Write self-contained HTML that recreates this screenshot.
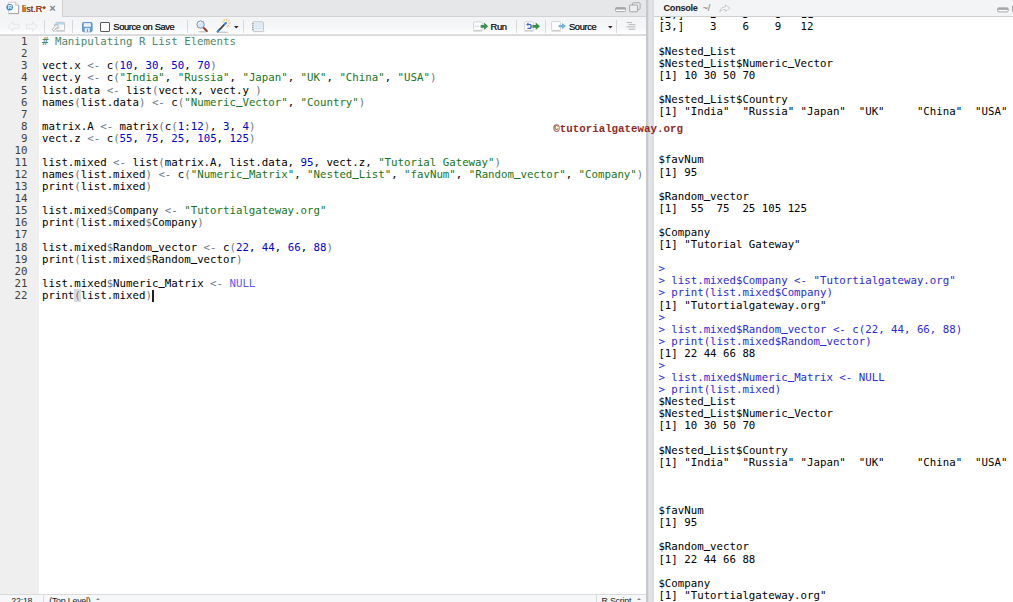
<!DOCTYPE html>
<html><head><meta charset="utf-8"><title>list.R</title>
<style>
html,body{margin:0;padding:0;}
body{width:1013px;height:602px;overflow:hidden;position:relative;background:#fff;font-family:"Liberation Sans",sans-serif;}
.abs{position:absolute;}
svg{position:absolute;overflow:visible;}
#left{left:0;top:0;width:646px;height:602px;background:#fff;overflow:hidden;}
#tabbar{left:0;top:0;width:646px;height:17px;background:#e6e7e9;border-bottom:1px solid #d2d3d5;box-sizing:border-box;}
#tab{left:0;top:0;width:63px;height:17px;background:#f4f5f6;border-right:1px solid #cfd0d2;box-sizing:border-box;}
#tab .nm{left:22.1px;top:3.6px;font-size:9.1px;color:#863c1e;letter-spacing:0px;text-shadow:0 0 0.5px #863c1e;}
#tab .x{left:49.2px;top:2.1px;font-size:11px;color:#808285;font-weight:bold;}
#toolbar{left:0;top:17px;width:646px;height:19px;background:linear-gradient(#f3f4f5 0%,#f6f7f8 60%,#ffffff 88%,#dcddde 92%,#d8d9da 100%);box-sizing:border-box;}
.tb{font-size:9.4px;color:#222;top:3.6px;letter-spacing:-0.4px;white-space:pre;text-shadow:0 0 0.15px #333;}
.sep{top:3px;width:1.4px;height:13px;background:#d8d9da;}
#editor{left:0;top:36px;width:646px;height:558px;background:#fff;overflow:hidden;}
#gutter{left:0;top:0;width:39px;height:558px;background:#efefef;}
#lines{left:0;top:0.2px;width:646px;}
.ln{height:12.09px;line-height:12.09px;white-space:pre;font-family:"DejaVu Sans Mono","Liberation Mono",monospace;font-size:10.74px;color:#000;}
.ln .no{display:inline-block;width:27.5px;text-align:right;color:#404040;}
.ln .cd{position:absolute;left:42px;}
u{text-decoration:none;position:relative;top:-2px;font-weight:bold;}
.c{color:#4c886b;}
.o{color:#687687;}
.p{color:#687687;}
.m{color:#687687;background:#dcdcdc;}
.n{color:#0000cd;}
.s{color:#167522;}
.k{color:#585cf6;}
.cur{display:inline-block;width:1.7px;height:12.5px;background:#2a1c1e;vertical-align:top;margin-left:0.2px;}
#status{left:0;top:594px;width:646px;height:8px;background:#f6f7f8;border-top:1px solid #d9dadb;box-sizing:border-box;overflow:hidden;}
#status span{position:absolute;top:1px;font-size:8.8px;color:#222;white-space:pre;letter-spacing:-0.2px;}
#status i{position:absolute;top:0;width:1px;height:8px;background:#d9dadb;}
#status b{position:absolute;top:3.4px;width:0;height:0;border-left:2px solid transparent;border-right:2px solid transparent;border-bottom:2.4px solid #888;}
#split{left:646px;top:0;width:8px;height:602px;background:linear-gradient(90deg,#d4d6d8 0,#c4c6c9 0.6px,#c6c8cb 2px,#dcdde0 2.6px,#e3e4e7 3.5px,#e2e3e6 5.4px,#dadbde 6px,#dcdde0 7.6px,#eeeeef 8px);}
#right{left:654px;top:0;width:359px;height:602px;background:#fff;overflow:hidden;}
#chead{left:0;top:0;width:359px;height:17px;background:#f3f4f5;border-bottom:1px solid #cecfd1;box-sizing:border-box;}
#chead .t{left:9.5px;top:3px;font-size:9.2px;font-weight:bold;color:#222;letter-spacing:-0.3px;}
#chead .pp{left:48.5px;top:3px;font-size:9.2px;color:#777;}
#cons{left:4.4px;top:9.3px;width:360px;}
.cl{height:12.1px;line-height:12.1px;white-space:pre;font-family:"DejaVu Sans Mono","Liberation Mono",monospace;font-size:10.74px;color:#000;}
.cl.i{color:#2a2ad8;}
#wm{left:553.3px;top:123.4px;font-family:"Liberation Mono",monospace;font-weight:bold;font-size:10.8px;color:#8e2b26;white-space:pre;z-index:5;}
</style></head><body>
<div id="left" class="abs">
  <div id="tabbar" class="abs"></div>
  <div id="tab" class="abs">
    <svg style="left:6px;top:1px" width="14" height="14" viewBox="0 0 14 14">
      <path d="M2.6 1.2 H9.6 L12.6 4.2 V12.6 H2.6 Z" fill="#fff" stroke="#c6c8ca" stroke-width="0.9"/>
      <path d="M12.6 4.2 V12.6 H2.6" fill="none" stroke="#a2a4a7" stroke-width="1"/>
      <path d="M9.6 1.2 V4.2 H12.6" fill="#eee" stroke="#b4b6b8" stroke-width="0.8"/>
      <circle cx="3.7" cy="6.2" r="3.3" fill="#4b86c6"/>
      <text x="1.7" y="8.3" font-family="Liberation Sans,sans-serif" font-size="5.8" font-weight="bold" fill="#fff">R</text>
    </svg>
    <span class="nm abs">list.R*</span><span class="x abs">×</span>
  </div>
  <svg style="left:614px;top:2px" width="28" height="12" viewBox="0 0 28 12">
    <rect x="1.6" y="5.6" width="10" height="4" rx="1" fill="#fff" stroke="#a6a7a9" stroke-width="1"/>
    <rect x="1.6" y="5.6" width="10" height="2" fill="#a6a7a9"/>
    <rect x="18.5" y="0.8" width="7.6" height="6.6" rx="0.8" fill="#eceded" stroke="#9c9d9f" stroke-width="0.9"/>
    <rect x="15.6" y="3" width="8" height="6.8" rx="0.8" fill="#eceded" stroke="#9c9d9f" stroke-width="0.9"/>
  </svg>
  <div id="toolbar" class="abs">
    <!-- back / forward arrows -->
    <svg style="left:7px;top:4px" width="32" height="12" viewBox="0 0 32 12">
      <path d="M1 5.5 L6 0.8 V3.3 H12 V7.7 H6 V10.2 Z" fill="#f6f6f7" stroke="#e3e4e5" stroke-width="0.9"/>
      <path d="M30.5 5.5 L25.5 0.8 V3.3 H19.5 V7.7 H25.5 V10.2 Z" fill="#f6f6f7" stroke="#e3e4e5" stroke-width="0.9"/>
    </svg>
    <i class="sep abs" style="left:43.5px"></i>
    <!-- show in new window -->
    <svg style="left:51px;top:4px" width="15" height="12" viewBox="0 0 15 12">
      <rect x="2" y="9.9" width="12.4" height="0.9" fill="#d4d5d7"/>
      <rect x="4.9" y="1.3" width="8.6" height="8.4" rx="1" fill="#f9fafb" stroke="#b2b4b7" stroke-width="0.8"/>
      <rect x="5.3" y="1.8" width="7.8" height="1.8" fill="#a6daf7"/>
      <path d="M8.8 4.2 V9.4" stroke="#e2e3e5" stroke-width="0.7"/>
      <path d="M7 3.9 L7 7.9 L5.7 6.6 L2.6 9.8 L1.1 8.3 L4.3 5.2 L3 3.9 Z" fill="#fbfbfc" stroke="#a4a6a9" stroke-width="0.8" stroke-linejoin="round"/>
    </svg>
    <i class="sep abs" style="left:72px"></i>
    <!-- save -->
    <svg style="left:81.8px;top:4.7px" width="11" height="11" viewBox="0 0 11 11">
      <rect x="0.5" y="0.5" width="9.6" height="9.3" rx="1.1" fill="#64a0d9" stroke="#4d87c6" stroke-width="0.8"/>
      <rect x="1.8" y="1.2" width="7" height="3.5" fill="#f8fbfe"/>
      <path d="M2.6 2.5 H8 M2.6 3.6 H8" stroke="#dde5ee" stroke-width="0.5"/>
      <rect x="2.7" y="6.2" width="5" height="3.6" fill="#f1f6fc"/>
      <rect x="4.9" y="6.9" width="1.2" height="2.9" fill="#64a0d9"/>
    </svg>
    <!-- checkbox -->
    <div class="abs" style="left:100px;top:5px;width:10px;height:10px;box-sizing:border-box;border:1px solid #5a5a5a;background:#fff;border-radius:1px"></div>
    <span class="tb abs" style="left:113.3px">Source on Save</span>
    <i class="sep abs" style="left:186.5px"></i>
    <!-- magnifier -->
    <svg style="left:195px;top:3px" width="14" height="13" viewBox="0 0 14 13">
      <ellipse cx="8" cy="11.8" rx="5" ry="0.7" fill="#c8c9cb"/>
      <path d="M8 7.2 L11.8 11" stroke="#8b3d1c" stroke-width="1.9" stroke-linecap="round"/>
      <circle cx="5.6" cy="4.6" r="3.7" fill="#d3e7f8" stroke="#8796a5" stroke-width="1"/>
      <path d="M3.4 3.8 A2.5 2.5 0 0 1 6 2.2" stroke="#fff" stroke-width="0.9" fill="none"/>
    </svg>
    <!-- wand -->
    <svg style="left:215px;top:1px" width="18" height="16" viewBox="0 0 18 16">
      <ellipse cx="8" cy="14.2" rx="6" ry="0.7" fill="#c8c9cb"/>
      <path d="M2.6 13.6 L10.8 5" stroke="#3b3d42" stroke-width="1.8" stroke-linecap="round"/>
      <path d="M2.6 13.6 L3.7 12.4" stroke="#3c8fdc" stroke-width="1.9" stroke-linecap="round"/>
      <path d="M9.7 6.1 L10.8 5" stroke="#3c8fdc" stroke-width="1.9" stroke-linecap="round"/>
      <g stroke="#e4b548" stroke-width="0.8" stroke-linecap="round">
        <path d="M9 1.2 L9.6 2.6"/><path d="M12 0.8 L11.8 2.6"/><path d="M14.6 2 L13.3 3.3"/><path d="M15.2 5.2 L13.8 5.2"/><path d="M14.2 8.2 L13 7.2"/><path d="M12.4 8.8 L12.2 7.8"/><path d="M7.4 3.2 L8.6 4"/>
      </g>
    </svg>
    <svg style="left:233.6px;top:8.8px" width="5" height="3" viewBox="0 0 5 3"><path d="M0 0 H4.6 L2.3 2.4 Z" fill="#3a2226"/></svg>
    <i class="sep abs" style="left:242.5px"></i>
    <!-- notebook -->
    <svg style="left:251px;top:4px" width="14" height="12" viewBox="0 0 14 12">
      <rect x="1.8" y="0.8" width="10.6" height="9.6" rx="1" fill="#f4f7fa" stroke="#b9bbbd" stroke-width="0.9"/>
      <path d="M3.2 3 H11.6 M3.2 5.2 H11.6 M3.2 7.4 H11.6" stroke="#c3dcf0" stroke-width="1"/>
      <path d="M1 2.6 H2.8 M1 4.6 H2.8 M1 6.6 H2.8 M1 8.6 H2.8" stroke="#9c9ea1" stroke-width="0.8"/>
      <rect x="3" y="10.4" width="10.6" height="0.8" fill="#cfd0d2"/>
    </svg>
    <!-- Run -->
    <svg style="left:473px;top:4px" width="16" height="12" viewBox="0 0 16 12">
      <rect x="0.6" y="0.8" width="8.6" height="8.6" rx="0.8" fill="#fdfdfe" stroke="#c9cacc" stroke-width="0.8"/>
      <path d="M0.6 10 H9.4" stroke="#bdbec0" stroke-width="0.9"/>
      <path d="M2 5.2 H6.6" stroke="#a9cdec" stroke-width="1.1" stroke-dasharray="1.6 0.6"/>
      <path d="M7.6 3.9 H10.9 V1.6 L15.2 5.3 L10.9 9 V6.7 H7.6 Z" fill="#3f8f4d"/>
    </svg>
    <span class="tb abs" style="left:490.6px">Run</span>
    <i class="sep abs" style="left:515.5px"></i>
    <svg style="left:524px;top:4px" width="17" height="12" viewBox="0 0 17 12">
      <rect x="0.6" y="0.8" width="8.8" height="8.6" rx="0.8" fill="#fdfdfe" stroke="#c9cacc" stroke-width="0.8"/>
      <path d="M0.6 10 H9.6" stroke="#bdbec0" stroke-width="0.9"/>
      <path d="M3.4 7.4 H5.2 A2 2 0 0 0 5.2 3.4 H3" stroke="#3465e0" stroke-width="1.3" fill="none"/>
      <path d="M4.4 1.6 L2.2 3.4 L4.4 5.2 Z" fill="#3465e0"/>
      <path d="M8.4 3.9 H11.7 V1.6 L16 5.3 L11.7 9 V6.7 H8.4 Z" fill="#3f8f4d"/>
    </svg>
    <i class="sep abs" style="left:544.5px"></i>
    <svg style="left:551px;top:4px" width="16" height="12" viewBox="0 0 16 12">
      <rect x="0.6" y="0.6" width="8.8" height="8.8" rx="0.8" fill="#fdfdfe" stroke="#c9cacc" stroke-width="0.8"/>
      <path d="M0.6 10 H9.6" stroke="#bdbec0" stroke-width="0.9"/>
      <path d="M7.6 4 H11 V2 L15 5.1 L11 8.2 V6.2 H7.6 Z" fill="#72b4de"/>
    </svg>
    <span class="tb abs" style="left:569px">Source</span>
    <svg style="left:607.6px;top:8.6px" width="5" height="3" viewBox="0 0 5 3"><path d="M0 0 H4.6 L2.3 2.6 Z" fill="#3a2226"/></svg>
    <i class="sep abs" style="left:615.5px"></i>
    <svg style="left:626px;top:5px" width="10" height="9" viewBox="0 0 10 9">
      <path d="M0.6 0.6 H6 M2.6 2.7 H9.4 M0.4 4.9 H9.4 M2.6 7.2 H9.4" stroke="#b6b7b9" stroke-width="1"/>
    </svg>
  </div>
  <div id="editor" class="abs">
    <div id="gutter" class="abs"></div>
    <div id="lines" class="abs">
<div class="ln"><span class="no">1</span><span class="cd"><span class="c"># Manipulating R List Elements</span></span></div>
<div class="ln"><span class="no">2</span><span class="cd"></span></div>
<div class="ln"><span class="no">3</span><span class="cd">vect.x <span class="o">&lt;-</span> c<span class="p">(</span><span class="n">10</span>, <span class="n">30</span>, <span class="n">50</span>, <span class="n">70</span><span class="p">)</span></span></div>
<div class="ln"><span class="no">4</span><span class="cd">vect.y <span class="o">&lt;-</span> c<span class="p">(</span><span class="s">"India"</span>, <span class="s">"Russia"</span>, <span class="s">"Japan"</span>, <span class="s">"UK"</span>, <span class="s">"China"</span>, <span class="s">"USA"</span><span class="p">)</span></span></div>
<div class="ln"><span class="no">5</span><span class="cd">list.data <span class="o">&lt;-</span> list<span class="p">(</span>vect.x, vect.y <span class="p">)</span></span></div>
<div class="ln"><span class="no">6</span><span class="cd">names<span class="p">(</span>list.data<span class="p">)</span> <span class="o">&lt;-</span> c<span class="p">(</span><span class="s">"Numeric<u>_</u>Vector"</span>, <span class="s">"Country"</span><span class="p">)</span></span></div>
<div class="ln"><span class="no">7</span><span class="cd"></span></div>
<div class="ln"><span class="no">8</span><span class="cd">matrix.A <span class="o">&lt;-</span> matrix<span class="p">(</span>c<span class="p">(</span><span class="n">1</span>:<span class="n">12</span><span class="p">)</span>, <span class="n">3</span>, <span class="n">4</span><span class="p">)</span></span></div>
<div class="ln"><span class="no">9</span><span class="cd">vect.z <span class="o">&lt;-</span> c<span class="p">(</span><span class="n">55</span>, <span class="n">75</span>, <span class="n">25</span>, <span class="n">105</span>, <span class="n">125</span><span class="p">)</span></span></div>
<div class="ln"><span class="no">10</span><span class="cd"></span></div>
<div class="ln"><span class="no">11</span><span class="cd">list.mixed <span class="o">&lt;-</span> list<span class="p">(</span>matrix.A, list.data, <span class="n">95</span>, vect.z, <span class="s">"Tutorial Gateway"</span><span class="p">)</span></span></div>
<div class="ln"><span class="no">12</span><span class="cd">names<span class="p">(</span>list.mixed<span class="p">)</span> <span class="o">&lt;-</span> c<span class="p">(</span><span class="s">"Numeric<u>_</u>Matrix"</span>, <span class="s">"Nested<u>_</u>List"</span>, <span class="s">"favNum"</span>, <span class="s">"Random<u>_</u>vector"</span>, <span class="s">"Company"</span><span class="p">)</span></span></div>
<div class="ln"><span class="no">13</span><span class="cd">print<span class="p">(</span>list.mixed<span class="p">)</span></span></div>
<div class="ln"><span class="no">14</span><span class="cd"></span></div>
<div class="ln"><span class="no">15</span><span class="cd">list.mixed<span class="o">$</span>Company <span class="o">&lt;-</span> <span class="s">"Tutortialgateway.org"</span></span></div>
<div class="ln"><span class="no">16</span><span class="cd">print<span class="p">(</span>list.mixed<span class="o">$</span>Company<span class="p">)</span></span></div>
<div class="ln"><span class="no">17</span><span class="cd"></span></div>
<div class="ln"><span class="no">18</span><span class="cd">list.mixed<span class="o">$</span>Random<u>_</u>vector <span class="o">&lt;-</span> c<span class="p">(</span><span class="n">22</span>, <span class="n">44</span>, <span class="n">66</span>, <span class="n">88</span><span class="p">)</span></span></div>
<div class="ln"><span class="no">19</span><span class="cd">print<span class="p">(</span>list.mixed<span class="o">$</span>Random<u>_</u>vector<span class="p">)</span></span></div>
<div class="ln"><span class="no">20</span><span class="cd"></span></div>
<div class="ln"><span class="no">21</span><span class="cd">list.mixed<span class="o">$</span>Numeric<u>_</u>Matrix <span class="o">&lt;-</span> <span class="k">NULL</span></span></div>
<div class="ln"><span class="no">22</span><span class="cd">print<span class="m">(</span>list.mixed<span class="p">)</span><i class="cur"></i></span></div>
    </div>
  </div>
  <div id="status" class="abs"><span style="left:11.3px">22:18</span><i style="left:43px"></i><span style="left:49.2px">(Top Level)</span><b style="left:95.8px"></b><i style="left:596px"></i><span style="left:601.5px">R Script</span><b style="left:637.3px"></b></div>
</div>
<div id="split" class="abs"></div>
<div id="right" class="abs">
  <div id="cons" class="abs">
<div class="cl o">[2,]    2    5    8   11</div>
<div class="cl o">[3,]    3    6    9   12</div>
<div class="cl o">&nbsp;</div>
<div class="cl o">$Nested<u>_</u>List</div>
<div class="cl o">$Nested<u>_</u>List$Numeric<u>_</u>Vector</div>
<div class="cl o">[1] 10 30 50 70</div>
<div class="cl o">&nbsp;</div>
<div class="cl o">$Nested<u>_</u>List$Country</div>
<div class="cl o">[1] "India"  "Russia" "Japan"  "UK"     "China"  "USA"</div>
<div class="cl o">&nbsp;</div>
<div class="cl o">&nbsp;</div>
<div class="cl o">&nbsp;</div>
<div class="cl o">$favNum</div>
<div class="cl o">[1] 95</div>
<div class="cl o">&nbsp;</div>
<div class="cl o">$Random<u>_</u>vector</div>
<div class="cl o">[1]  55  75  25 105 125</div>
<div class="cl o">&nbsp;</div>
<div class="cl o">$Company</div>
<div class="cl o">[1] "Tutorial Gateway"</div>
<div class="cl o">&nbsp;</div>
<div class="cl i">&gt; </div>
<div class="cl i">&gt; list.mixed$Company &lt;- "Tutortialgateway.org"</div>
<div class="cl i">&gt; print(list.mixed$Company)</div>
<div class="cl o">[1] "Tutortialgateway.org"</div>
<div class="cl i">&gt; </div>
<div class="cl i">&gt; list.mixed$Random<u>_</u>vector &lt;- c(22, 44, 66, 88)</div>
<div class="cl i">&gt; print(list.mixed$Random<u>_</u>vector)</div>
<div class="cl o">[1] 22 44 66 88</div>
<div class="cl i">&gt; </div>
<div class="cl i">&gt; list.mixed$Numeric<u>_</u>Matrix &lt;- NULL</div>
<div class="cl i">&gt; print(list.mixed)</div>
<div class="cl o">$Nested<u>_</u>List</div>
<div class="cl o">$Nested<u>_</u>List$Numeric<u>_</u>Vector</div>
<div class="cl o">[1] 10 30 50 70</div>
<div class="cl o">&nbsp;</div>
<div class="cl o">$Nested<u>_</u>List$Country</div>
<div class="cl o">[1] "India"  "Russia" "Japan"  "UK"     "China"  "USA"</div>
<div class="cl o">&nbsp;</div>
<div class="cl o">&nbsp;</div>
<div class="cl o">&nbsp;</div>
<div class="cl o">$favNum</div>
<div class="cl o">[1] 95</div>
<div class="cl o">&nbsp;</div>
<div class="cl o">$Random<u>_</u>vector</div>
<div class="cl o">[1] 22 44 66 88</div>
<div class="cl o">&nbsp;</div>
<div class="cl o">$Company</div>
<div class="cl o">[1] "Tutortialgateway.org"</div>
  </div>
  <div id="chead" class="abs"><span class="t abs">Console</span><span class="pp abs">~/</span>
    <svg style="left:65px;top:3.5px" width="12" height="9" viewBox="0 0 12 9">
      <path d="M0.8 8 C1 4.6 3 3 6.4 3 V0.8 L11 4.2 L6.4 7.4 V5.4 C4 5.2 2 6 0.8 8 Z" fill="#fafafa" stroke="#c3c4c6" stroke-width="0.9" stroke-linejoin="round"/>
    </svg>
    <svg style="left:343px;top:6.5px" width="16" height="6" viewBox="0 0 16 6">
      <rect x="0.7" y="0.9" width="10.4" height="4" rx="1" fill="#fff" stroke="#a6a7a9" stroke-width="1"/>
      <rect x="0.7" y="0.9" width="10.4" height="2" fill="#a6a7a9"/>
      <rect x="15" y="-1.2" width="4" height="6.2" fill="#a6a7a9"/>
    </svg>
  </div>
</div>
<div id="wm" class="abs">©tutorialgateway.org</div>
</body></html>
